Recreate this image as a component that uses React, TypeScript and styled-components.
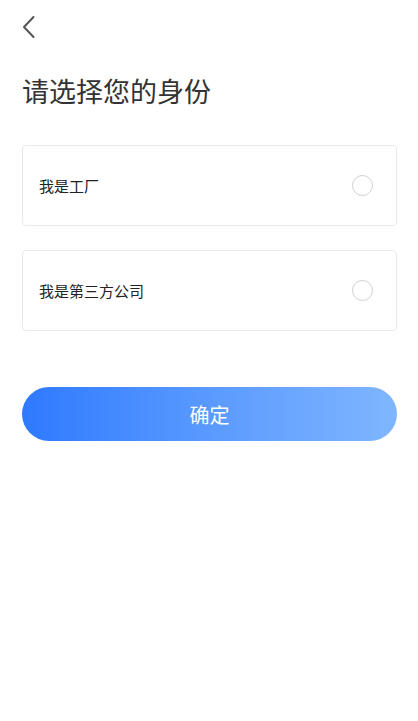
import React, { useState } from 'react';
import styled, { createGlobalStyle } from 'styled-components';

const GlobalStyle = createGlobalStyle`
  html, body {
    margin: 0;
    padding: 0;
    background: #ffffff;
  }
  body {
    font-family: "Noto Sans CJK SC", "Noto Sans", sans-serif;
    -webkit-font-smoothing: antialiased;
  }
`;

const Page = styled.div`
  display: flex;
  flex-direction: column;
  align-items: stretch;
  padding: 0 21px 0 22px;
  min-height: 721px;
  box-sizing: border-box;
`;

const TopBar = styled.div`
  height: 56px;
  display: flex;
  align-items: flex-start;
  padding-top: 15px;
  box-sizing: border-box;
`;

const BackButton = styled.button`
  border: none;
  background: none;
  padding: 0;
  margin: 0;
  width: 14px;
  height: 24px;
  cursor: pointer;
  display: flex;
`;

const Title = styled.h1`
  margin: 21px 0 0;
  font-size: 27px;
  line-height: 27px;
  font-weight: 400;
  color: #333333;
`;

const List = styled.div`
  display: flex;
  flex-direction: column;
  gap: 24px;
  margin-top: 41px;
`;

const Option = styled.label`
  height: 81px;
  box-sizing: border-box;
  border: 1px solid #e9e9e9;
  border-radius: 4px;
  display: flex;
  align-items: center;
  justify-content: space-between;
  padding: 0 23px 0 16px;
  font-size: 15px;
  color: #222222;
  cursor: pointer;
`;

const Radio = styled.span<{ $checked: boolean }>`
  width: 21px;
  height: 21px;
  box-sizing: border-box;
  border-radius: 50%;
  border: 1.5px solid ${(p) => (p.$checked ? '#2f7bff' : '#cfcfcf')};
  background: ${(p) => (p.$checked ? 'radial-gradient(circle, #2f7bff 45%, transparent 48%)' : 'transparent')};
`;

const ConfirmButton = styled.button`
  margin-top: 56px;
  height: 54px;
  border: none;
  border-radius: 27px;
  background: linear-gradient(90deg, #2e79ff 0%, #5a9aff 50%, #80b6ff 100%);
  color: #ffffff;
  font-family: "Noto Sans CJK SC", sans-serif;
  font-size: 20px;
  cursor: pointer;
`;

const options = ['我是工厂', '我是第三方公司'];

const App: React.FC = () => {
  const [selected, setSelected] = useState<number | null>(null);

  return (
    <>
      <GlobalStyle />
      <Page>
        <TopBar>
          <BackButton aria-label="返回">
            <svg width="14" height="24" viewBox="0 0 14 24" fill="none">
              <path d="M11.5 2 L2 12 L11.5 22" stroke="#555555" strokeWidth="2" strokeLinecap="round" strokeLinejoin="round" />
            </svg>
          </BackButton>
        </TopBar>
        <Title>请选择您的身份</Title>
        <List>
          {options.map((label, i) => (
            <Option key={label} onClick={() => setSelected(i)}>
              {label}
              <Radio $checked={selected === i} />
            </Option>
          ))}
        </List>
        <ConfirmButton>确定</ConfirmButton>
      </Page>
    </>
  );
};

export default App;
